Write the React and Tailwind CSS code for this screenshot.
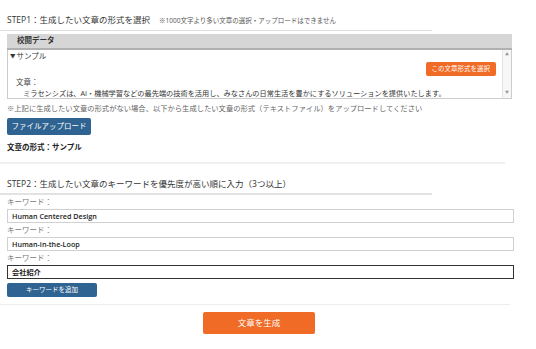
import React from 'react';

const font = { fontFamily: '"Open Sans", "Noto Sans CJK JP", sans-serif' };

const KeywordField = ({ value, active }) => (
  <div className="px-[7px]">
    <div className="text-[7.5px] leading-[12px] text-[#777] h-[12px]">キーワード：</div>
    <div
      className={`mt-[1px] h-[14px] w-[507px] flex items-center px-[4px] text-[7.2px] font-semibold text-[#222] bg-white ${
        active ? 'border border-[#333]' : 'border border-[#d0d0d0]'
      }`}
    >
      {value}
    </div>
  </div>
);

const App = () => {
  return (
    <div className="w-[536px] h-[349px] bg-white overflow-hidden text-[#333]" style={font}>
      {/* STEP1 */}
      <div className="pt-[14px] w-[432px] border-b border-[#ddd] pb-[4px] pl-[7px] flex items-end">
        <span className="text-[8.5px] leading-[12px]">STEP1：生成したい文章の形式を選択</span>
        <span className="ml-[9px] text-[6.5px] leading-[10px] text-[#555]">※1000文字より多い文章の選択・アップロードはできません</span>
      </div>

      <div className="mx-[7px] mt-[3px] w-[505px]">
        <div className="h-[16px] bg-[#d6d6d6] border-b-2 border-[#b0b0b0] pl-[10px] flex items-center text-[7.5px] font-bold text-[#333]">
          校閲データ
        </div>
        <div className="h-[49px] border border-t-0 border-[#ccc] flex">
          <div className="flex-1 pl-[2px] pr-[6px] text-[7.5px] leading-[11px]">
            <div className="mt-[1px] flex items-center">
              <span className="text-[5.5px] mr-[1px]">▼</span>
              <span>サンプル</span>
            </div>
            <div className="flex justify-end mt-[0px]">
              <button className="h-[14px] px-[6px] bg-[#ef6b26] text-white text-[6.5px] leading-[14px] rounded-[2px]">この文章形式を選択</button>
            </div>
            <div className="pl-[6px] mt-[1px] text-[#444]">文章：</div>
            <div className="pl-[13px] text-[7.2px] text-[#333] whitespace-nowrap">
              ミラセンシズは、AI・機械学習などの最先端の技術を活用し、みなさんの日常生活を豊かにするソリューションを提供いたします。
            </div>
          </div>
          <div className="w-[9px] border-l border-[#e4e4e4] bg-[#f7f7f7] flex flex-col justify-between items-center py-[2px] text-[4px] leading-[6px] text-[#999]">
            <span>▲</span>
            <span>▼</span>
          </div>
        </div>
      </div>

      <div className="pl-[7px] mt-[3px] text-[7.3px] leading-[12px] text-[#666] whitespace-nowrap">
        ※上記に生成したい文章の形式がない場合、以下から生成したい文章の形式（テキストファイル）をアップロードしてください
      </div>
      <div className="pl-[7px] mt-[4px] flex">
        <button className="h-[17px] w-[84px] bg-[#2f6391] text-white text-[7.5px] leading-[17px] rounded-[2px]">ファイルアップロード</button>
      </div>
      <div className="pl-[7px] mt-[6px] text-[7.5px] leading-[12px] font-bold text-[#222]">文章の形式：サンプル</div>

      <div className="mt-[9px] w-[505px] h-[2px] bg-[#f0f0f0]" />

      {/* STEP2 */}
      <div className="mt-[14px] w-[432px] border-b-2 border-[#e2e2e2] pb-[3px] pl-[7px] flex">
        <span className="text-[8.5px] leading-[12px]">STEP2：生成したい文章のキーワードを優先度が高い順に入力（3つ以上）</span>
      </div>

      <div className="mt-[1px] flex flex-col gap-[1px]">
        <KeywordField value="Human Centered Design" />
        <KeywordField value="Human-in-the-Loop" />
        <KeywordField value="会社紹介" active />
      </div>
      <div className="pl-[7px] mt-[4px] flex">
        <button className="h-[14px] w-[90px] bg-[#2f6391] text-white text-[6.5px] leading-[14px] rounded-[2px]">キーワードを追加</button>
      </div>

      <div className="mt-[7px] w-[510px] h-[1px] bg-[#eeeeee]" />

      <div className="flex justify-center mt-[7px] pr-[18px]">
        <button className="h-[22px] w-[112px] bg-[#ef6b26] text-white text-[8.5px] leading-[22px] rounded-[2px]">文章を生成</button>
      </div>
    </div>
  );
};

export default App;
